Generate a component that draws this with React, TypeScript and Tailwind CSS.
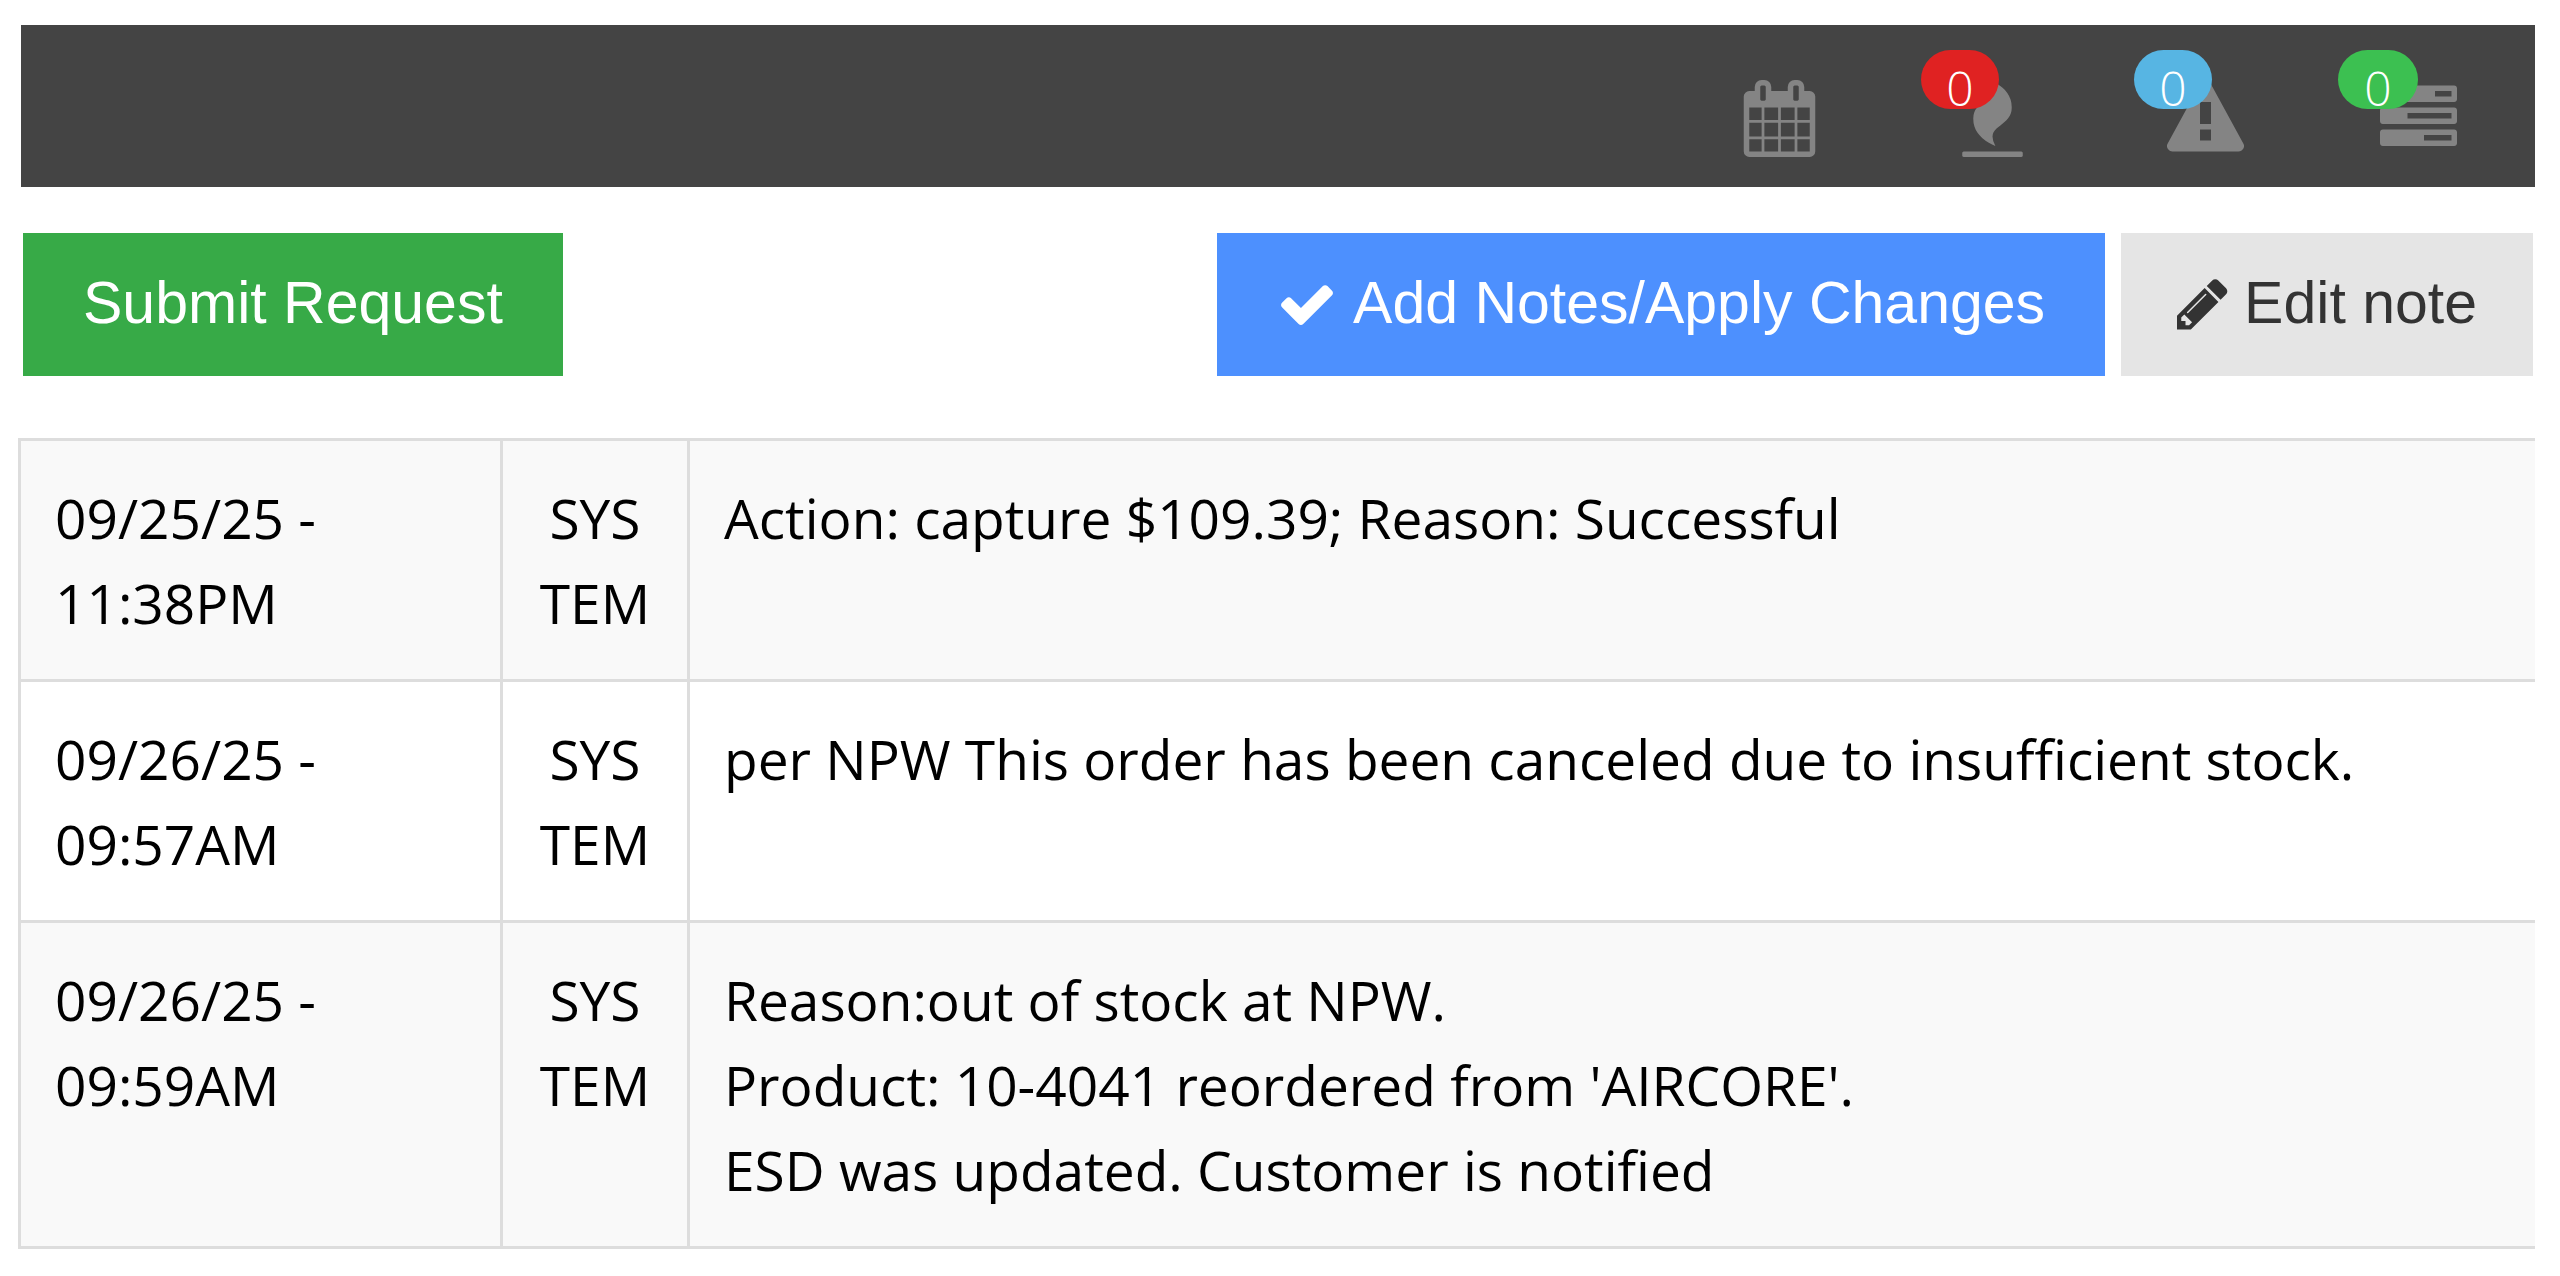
import { ReactNode } from "react";

type Note = {
  date: string;
  user: string;
  lines: string[];
};

const notes: Note[] = [
  {
    date: "09/25/25 - 11:38PM",
    user: "SYSTEM",
    lines: ["Action: capture $109.39; Reason: Successful"],
  },
  {
    date: "09/26/25 - 09:57AM",
    user: "SYSTEM",
    lines: ["per NPW This order has been canceled due to insufficient stock."],
  },
  {
    date: "09/26/25 - 09:59AM",
    user: "SYSTEM",
    lines: [
      "Reason:out of stock at NPW.",
      "Product: 10-4041 reordered from 'AIRCORE'.",
      "ESD was updated. Customer is notified",
    ],
  },
];

const icons = {
  calendar:
    "M192 1664h288v-288h-288v288zm352 0h320v-288h-320v288zm-352-352h288v-320h-288v320zm352 0h320v-320h-320v320zm-352-384h288v-288h-288v288zm736 736h320v-288h-320v288zm-384-736h320v-288h-320v288zm768 736h288v-288h-288v288zm-384-352h320v-320h-320v320zm-352-864v-288q0-13-9.5-22.5t-22.5-9.5h-64q-13 0-22.5 9.5t-9.5 22.5v288q0 13 9.5 22.5t22.5 9.5h64q13 0 22.5-9.5t9.5-22.5zm736 864h288v-320h-288v320zm-384-384h320v-288h-320v288zm384 0h288v-288h-288v288zm32-480v-288q0-13-9.5-22.5t-22.5-9.5h-64q-13 0-22.5 9.5t-9.5 22.5v288q0 13 9.5 22.5t22.5 9.5h64q13 0 22.5-9.5t9.5-22.5zm384-64v1280q0 52-38 90t-90 38h-1408q-52 0-90-38t-38-90v-1280q0-52 38-90t90-38h128v-96q0-66 47-113t113-47h64q66 0 113 47t47 113v96h384v-96q0-66 47-113t113-47h64q66 0 113 47t47 113v96h128q52 0 90 38t38 90z",
  fire: "M1600 1696v64q0 13-9.5 22.5t-22.5 9.5h-1344q-13 0-22.5-9.5t-9.5-22.5v-64q0-13 9.5-22.5t22.5-9.5h1344q13 0 22.5 9.5t9.5 22.5zm-256-1056q0 78-24.5 144t-64 112.5-87.5 88-96 77.5-87.5 72-64 81.5-24.5 96.5q0 96 67 224l-4-1 1 1q-90-41-160-83t-138.5-100-113.5-122.5-72.5-150.5-27.5-184q0-78 24.5-144t64-112.5 87.5-88 96-77.5 87.5-72 64-81.5 24.5-96.5q0-94-66-224l3 1-1-1q90 41 160 83t138.5 100 113.5 122.5 72.5 150.5 27.5 184z",
  warning:
    "M1024 1408v-256h-256v256h256zm0-384v-512h-256v512h256zM1008 67l768 1408q35 63-2 126-17 29-46.5 46t-63.5 17h-1536q-34 0-63.5-17t-46.5-46q-37-63-2-126l768-1408q17-31 47-49t65-18 65 18 47 49z",
  tasks:
    "M1024 1408h640v-128h-640v128zm-384-512h1024v-128h-1024v128zm640-512h384v-128h-384v128zm512 832v256q0 26-19 45t-45 19h-1664q-26 0-45-19t-19-45v-256q0-26 19-45t45-19h1664q26 0 45 19t19 45zm0-512v256q0 26-19 45t-45 19h-1664q-26 0-45-19t-19-45v-256q0-26 19-45t45-19h1664q26 0 45 19t19 45zm0-512v256q0 26-19 45t-45 19h-1664q-26 0-45-19t-19-45v-256q0-26 19-45t45-19h1664q26 0 45 19t19 45z",
  check:
    "M1671 566q0 40-28 68l-724 724-136 136q-28 28-68 28t-68-28l-136-136-362-362q-28-28-28-68t28-68l136-136q28-28 68-28t68 28l294 295 656-657q28-28 68-28t68 28l136 136q28 28 28 68z",
  pencil:
    "M491 1536l91-91-235-235-91 91v107h128v128h107zm523-928q0-22-22-22-10 0-17 7l-542 542q-7 7-7 17 0 22 22 22 10 0 17-7l542-542q7-7 7-17zm-54-192l416 416-832 832h-416v-416zm683 96q0 53-37 90l-166 166-416-416 166-165q36-38 90-38 53 0 91 38l235 234q37 39 37 91z",
};

function Icon({
  path,
  className,
  viewBox = "0 0 1792 1792",
}: {
  path: string;
  className: string;
  viewBox?: string;
}) {
  return (
    <svg aria-hidden="true" className={className} fill="currentColor" viewBox={viewBox}>
      <path d={path} fillRule="evenodd" />
    </svg>
  );
}

function NavItem({ label, path, badge }: { label: string; path: string; badge?: ReactNode }) {
  return (
    <button aria-label={label} className="relative text-[#848484]" type="button">
      <Icon className="block size-[77px]" path={path} />
      {badge}
    </button>
  );
}

function Badge({ className }: { className: string }) {
  return (
    <span
      className={`absolute -top-[30px] h-[59px] rounded-[30px] pt-2 text-center text-5xl leading-[59px] font-light text-white ${className}`}
    >
      0
    </span>
  );
}

export default function App() {
  return (
    <main className="min-h-screen bg-white pt-[25px] pr-[25px] pb-7 pl-[18px] font-['Open_Sans',sans-serif] text-black">
      <header className="ml-[3px] flex justify-end gap-[136px] bg-[#444444] pt-[55px] pr-[78px] pb-[30px]">
        <NavItem label="Calendar" path={icons.calendar} />
        <NavItem
          badge={<Badge className="-left-[33px] w-[78px] bg-[#e02222]" />}
          label="Hot items"
          path={icons.fire}
        />
        <NavItem
          badge={<Badge className="-left-[33px] w-[78px] bg-[#57b5e3]" />}
          label="Warnings"
          path={icons.warning}
        />
        <NavItem
          badge={<Badge className="-left-[42px] w-[80px] bg-[#3cc051]" />}
          label="Tasks"
          path={icons.tasks}
        />
      </header>

      <div className="mt-[46px] mr-0.5 ml-[5px] flex gap-4 font-['Liberation_Sans',Arial,sans-serif] text-[59px] leading-[85px]">
        <button
          className="mr-auto bg-[#37aa47] px-[60px] pt-7 pb-[30px] text-white"
          type="button"
        >
          Submit Request
        </button>
        <button
          className="flex items-center gap-4 bg-[#4d90fe] px-[60px] pt-7 pb-[30px] text-white"
          type="button"
        >
          <Icon className="size-[60px]" path={icons.check} />
          Add Notes/Apply Changes
        </button>
        <button
          className="flex items-center gap-4 bg-[#e5e5e5] px-14 pt-7 pb-[30px] text-[#333333]"
          type="button"
        >
          <Icon className="h-[60px] w-[51px]" path={icons.pencil} viewBox="128 0 1536 1792" />
          Edit note
        </button>
      </div>

      <table className="mt-[62px] w-full table-fixed border-collapse text-[55px] leading-[85px]">
        <colgroup>
          <col className="w-[482px]" />
          <col className="w-[187px]" />
          <col />
        </colgroup>
        <tbody>
          {notes.map((note) => (
            <tr className="border-y-[3px] border-[#dddddd] align-top odd:bg-[#f9f9f9]" key={note.date}>
              <td className="border-x-[3px] border-[#dddddd] p-[34px]">{note.date}</td>
              <td className="border-r-[3px] border-[#dddddd] p-[34px] text-center break-all">
                {note.user}
              </td>
              <td className="p-[34px]">
                {note.lines.map((line) => (
                  <p key={line}>{line}</p>
                ))}
              </td>
            </tr>
          ))}
        </tbody>
      </table>
    </main>
  );
}
